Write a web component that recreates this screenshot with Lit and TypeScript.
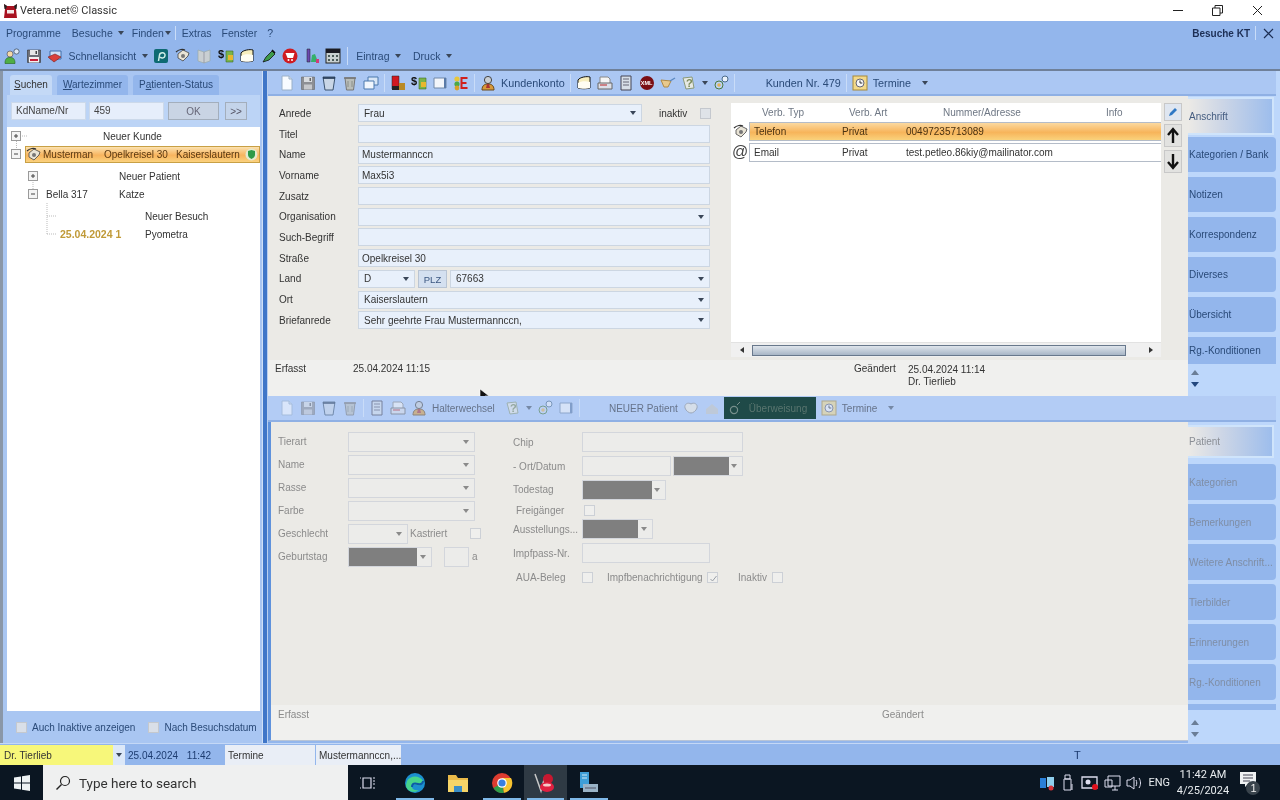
import { LitElement, html, css, svg } from "lit";
import { customElement } from "lit/decorators.js";

const icons: Record<string, any> = {
  person: svg`<circle cx="6" cy="6" r="3" fill="#f4d9a8" stroke="#556" stroke-width=".7"/><path d="M1 15.500c0-5 2-6 5-6s5 1 5 6z" fill="#4fae45" stroke="#2c6e2a" stroke-width=".7"/><circle cx="12.500" cy="3.500" r="2.600" fill="#dfe8f6" stroke="#456" stroke-width=".8"/>`,
  save: svg`<path d="M1.500 2h13v12.500h-13z" fill="#6f7078" stroke="#333" stroke-width=".6"/><path d="M4 2h8v5H4z" fill="#e8e8e8"/><path d="M3 9h10v5.500H3z" fill="#f4f0f0"/><path d="M4 11h8v2H4z" fill="#c8203a"/><path d="M9.500 3h1.500v3H9.500z" fill="#444"/>`,
  saveg: svg`<path d="M1.500 2h13v12.500h-13z" fill="#8d8f94" stroke="#666" stroke-width=".6"/><path d="M4 2h8v5H4z" fill="#d8dbdf"/><path d="M4 9.500h8v5H4z" fill="#c6c8cc"/><path d="M9.500 3h1.500v3H9.500z" fill="#666"/>`,
  screen: svg`<path d="M3 3h11v8H3z" fill="#cfe0f5" stroke="#3f6da8"/><path d="M1 9l7-3 6 3-7 5z" fill="#d9403a" stroke="#7b1f1c" stroke-width=".6"/>`,
  pbox: svg`<rect x="1" y="1" width="14" height="14" rx="2" fill="#0e6a73"/><path d="M5.500 13l1-6c.5-3 6-3 5.500 .5S8 10 7 9" fill="none" stroke="#cfeee8" stroke-width="1.500"/>`,
  phone: svg`<path d="M3 6l5-4 6 3-1 3-5 5-5-3z" fill="#e9e4d6" stroke="#444" stroke-width=".8"/><circle cx="8" cy="8" r="2" fill="#777"/><path d="M1 4c3-3 7-3 9-2" fill="none" stroke="#333" stroke-width="1.200"/>`,
  book: svg`<path d="M2 2l6 2 6-2v11l-6 2-6-2z" fill="#c9cfd2" stroke="#9aa" stroke-width=".7"/><path d="M8 4v11" stroke="#889" stroke-width=".7"/>`,
  money: svg`<path d="M8 3h7v11H8z" fill="#7ab44b" stroke="#3f6e26" stroke-width=".6"/><path d="M10 7h5v5h-5z" fill="#e8b72e"/><text x="0" y="10" font-size="11" font-weight="700" font-family="Liberation Sans" fill="#111">$</text>`,
  mail: svg`<path d="M2 5c2-3 9-4 12-3v11c-3 1-9 1-12 0z" fill="#f7eebe" stroke="#111" stroke-width="1"/><path d="M2 8c3-2 8-2 12-1v6c-3 1-9 1-12 0z" fill="#fffdf2"/>`,
  syringe: svg`<path d="M2 14l3-5 6-6 3 3-6 6z" fill="#3d9a4a" stroke="#111" stroke-width=".8"/><path d="M11 2l3 3" stroke="#111" stroke-width="1.600"/>`,
  stop: svg`<circle cx="8" cy="8" r="7.500" fill="#cf1b22"/><path d="M3.500 5h9l-1.500 5H5.500z" fill="#fff"/><circle cx="6.500" cy="12" r="1" fill="#fff"/><circle cx="10" cy="12" r="1" fill="#fff"/>`,
  bottles: svg`<path d="M3 1h3v13H3z" fill="#6a4ab0" stroke="#222" stroke-width=".5"/><path d="M8 7l3-1 3 8H7z" fill="#35b06a"/><path d="M12 11h3v4h-3z" fill="#d03c7a"/>`,
  cal: svg`<rect x="1" y="1" width="14" height="14" fill="#c8d0d0" stroke="#222"/><path d="M1 1h14v4H1z" fill="#1a1a22"/><path d="M3 7h2v2H3zm4 0h2v2H7zm4 0h2v2h-2zM3 11h2v2H3zm4 0h2v2H7zm4 0h2v2h-2z" fill="#4a5a58"/>`,
  doc: svg`<path d="M3 1h7l3 3v11H3z" fill="#f8fbff" stroke="#9ab0c8"/><path d="M10 1v3h3" fill="#d6e2f0" stroke="#9ab0c8"/>`,
  trash: svg`<path d="M2 2h12l-2 13H4z" fill="#c9d6e6" stroke="#3c5470"/><path d="M2 3h12" stroke="#1d3350" stroke-width="1.600"/>`,
  trash2: svg`<path d="M3 3h10l-1.500 12h-7z" fill="#b9bdb9" stroke="#777"/><path d="M2 3h12" stroke="#777" stroke-width="1.600"/><path d="M6 6v6M10 6v6" stroke="#8a8f8a"/>`,
  copy: svg`<path d="M5 2h10v8H5z" fill="#d8e6f6" stroke="#4a78ad"/><path d="M1 6h10v8H1z" fill="#f0f6fd" stroke="#4a78ad"/>`,
  red: svg`<path d="M2 1h7v13H2z" fill="#d01820" stroke="#222" stroke-width=".5"/><path d="M9 8h6v7H9z" fill="#b98a25"/><path d="M2 11h7v4H2z" fill="#222"/>`,
  win: svg`<path d="M2 3h12v10H2z" fill="#f2f5fa" stroke="#7088a8"/><path d="M12 3h2v10h-2z" fill="#5a7aa8"/>`,
  kasse: svg`<circle cx="4" cy="4" r="2.600" fill="#e8c63a"/><circle cx="4" cy="9" r="2.600" fill="#4aa84a"/><circle cx="4" cy="13" r="2.400" fill="#d8a22a"/><path d="M14.500 3H8.500v10h6M8.500 8h5" fill="none" stroke="#d0201c" stroke-width="2"/>`,
  agent: svg`<circle cx="8" cy="5" r="3.600" fill="#c9ced4" stroke="#444"/><path d="M2 15c0-5 3-6 6-6s6 1 6 6z" fill="#d89a3c" stroke="#6a4a1c"/><path d="M7 9h2l1 4H6z" fill="#a33"/>`,
  fax: svg`<path d="M3 2h8l2 2v5H3z" fill="#f5f5f5" stroke="#888"/><path d="M1 8h14v6H1z" fill="#dcdfe8" stroke="#666"/><path d="M3 10h7" stroke="#b22"/>`,
  note: svg`<path d="M3 1h10v14H3z" fill="#d7dfe8" stroke="#445"/><path d="M5 4h6M5 7h6M5 10h6" stroke="#667"/>`,
  xml: svg`<circle cx="8" cy="8" r="7" fill="#7a0e14"/><text x="1.800" y="10" font-size="5.500" font-weight="700" font-family="Liberation Sans" fill="#fff">XML</text>`,
  cup: svg`<path d="M1 5l10 1-3 6H4z" fill="#e8c98c" stroke="#b08a44"/><path d="M10 6l5-3" stroke="#5a88c0" stroke-width="1.400"/>`,
  help: svg`<path d="M2 3l9-1 2 11-8 1z" fill="#e7e9e3" stroke="#8a9a7a"/><text x="5" y="12" font-size="11" font-weight="700" font-family="Liberation Sans" fill="#7a8a5a">?</text>`,
  link: svg`<circle cx="6" cy="10" r="4" fill="#fff3" stroke="#4a7a40"/><circle cx="12" cy="4" r="3" fill="#eaf2fb" stroke="#4a6a8a"/><circle cx="6" cy="10" r="1.800" fill="#e2b35c"/>`,
  clock: svg`<rect x="1" y="1" width="14" height="14" fill="#f2d98a" stroke="#a88a3a"/><circle cx="8" cy="8" r="4" fill="#f7f7f7" stroke="#667"/><path d="M8 5.500V8h2.300" stroke="#333" fill="none"/>`,
  heart: svg`<path d="M2 8c-1-4 3-6 6-4 3-2 7 0 6 4-1 3-4 5-6 5s-5-2-6-5z" fill="#f1eee0" stroke="#888"/>`,
  home: svg`<path d="M2 9l6-5 6 5v5H2z" fill="#c8c8c2"/>`,
  ring: svg`<circle cx="7" cy="10" r="3.600" fill="none" stroke="#bfc9c4" stroke-width="1.200"/><path d="M10 5l3-3" stroke="#bfc9c4"/>`,
};
const ic = (n: string) => html`<svg class="ic" viewBox="0 0 16 16" width="16" height="16">${icons[n]}</svg>`;
const arrow = html`<i class="dd"></i>`;

type T = string | { t?: string; w?: number; sep?: boolean; a?: boolean; box?: string };
const renderTb = (items: T[]) =>
  items.map((it) => {
    if (typeof it === "string") return ic(it);
    if (it.sep) return html`<i class="sep"></i>`;
    if (it.a) return arrow;
    if (it.w) return html`<i style="width:${it.w}px;flex:none"></i>`;
    if (it.box) return html`<span class="ueber">${ic("ring")}<span>${it.box}</span></span>`;
    return html`<span class="tbt">${it.t}</span>`;
  });

const field = (v = "", w = 352, dd = false) =>
  html`<div class="f ${dd ? "" : "tx"}" style="width:${w}px"><span>${v}</span>${dd ? arrow : ""}</div>`;
const dateF = (w: number, g: number) =>
  html`<div class="f date" style="width:${w}px"><b style="width:${g}px"></b>${arrow}</div>`;

@customElement("app-root")
export class AppRoot extends LitElement {
  static styles = css`
    :host { display:block; width:1280px; height:800px; overflow:hidden; position:relative; background:#93b6ec;
      font:10px "Liberation Sans",Arial,sans-serif; color:#222; filter:blur(.35px); }
    * { box-sizing:border-box; }
    .ic { flex:none; display:block; }
    .dd { flex:none; width:0; height:0; border:3px solid transparent; border-top:4px solid #3a4658; border-bottom:0; display:block; }
    .sep { flex:none; width:1px; height:18px; background:#c9dcf8; }
    .titlebar { height:21px; background:#fff; display:flex; align-items:center; padding:0 3px; font:11px Roboto,"Liberation Sans",sans-serif; color:#333; }
    .titlebar .name { margin-left:2px; flex:1; }
    .wc { width:40px; height:21px; display:flex; align-items:center; justify-content:center; }
    .menubar { height:24px; display:flex; align-items:center; padding:0 6px; color:#2a4a78; font-size:10.5px; }
    .menubar span { white-space:nowrap; }
    .toolbar { height:24px; display:flex; align-items:center; padding:0 0 2px 4px; gap:5.5px; color:#2a4a78; font-size:10.5px; }
    .toolbar .sep { margin-right:3px; }
    .tbt { white-space:nowrap; color:#2a4a78; }
    .main { display:flex; height:674px; border-top:2px solid #6f8099; }
    .left { width:262px; flex:none; background:#a9c6f2; border-left:3px solid #8a97a8; padding:4px 2px 0 4px; display:flex; flex-direction:column; }
    .tabs { display:flex; height:20px; padding-left:3px; gap:5px; align-items:flex-end; }
    .tab { height:20px; padding:4px 6px 0; background:#93b6ec; border-radius:3px 3px 0 0; color:#2a4a78; white-space:nowrap; }
    .tab.on { background:#c4d9f6; color:#333; padding:4px 4px 0; }
    u { text-underline-offset:1px; }
    .search { height:32px; background:#bcd4f6; display:flex; align-items:center; padding-left:4px; gap:3px; }
    .sf { height:18px; background:#e6eefb; border:1px solid #ccd9ea; padding:2px 4px; color:#444; }
    .okb { height:18px; width:51px; margin-left:1px; background:#c9d4e4; border:1px solid #a3aebc; text-align:center; padding-top:3px; color:#667; }
    .more { height:18px; width:22px; margin-left:3px; background:#c4d4ea; border:1px solid #a3aebc; text-align:center; padding-top:3px; color:#556; }
    .tree { flex:1; background:#fff; position:relative; color:#333; }
    .lines { position:absolute; left:0; top:0; pointer-events:none; }
    .tr { height:18px; display:grid; align-items:center; white-space:nowrap; }
    .tr.a { grid-template-columns:96px 1fr; }
    .tr.b { grid-template-columns:112px 1fr; margin-top:4px; }
    .tr.b2 { grid-template-columns:39px 73px 1fr; }
    .tr.c { grid-template-columns:138px 1fr; margin-top:4px; }
    .tr.c2 { grid-template-columns:53px 85px 1fr; }
    .tr.c2 b { color:#c09a38; font-size:10.5px; }
    .sel { margin:1px 0 0 18px; height:17px; background:linear-gradient(#fce2b0,#f8b45e 55%,#fbd27e); border:1px solid #c8a045; display:flex; align-items:center; position:relative; white-space:nowrap; color:#5a3810; }
    .sel .ic { margin:0 1px 0 0; }
    .sel .shield { position:absolute; right:1px; top:1px; }
    .bottom { height:32px; padding-left:9px; display:flex; align-items:center; background:#a9c6f2; color:#2a4a78; white-space:nowrap; }
    .chk { flex:none; width:11px; height:11px; background:#f2f2f2; border:1px solid #c4c8ce; display:block; position:relative; }
    .bottom .chk { margin-right:5px; background:#d9dfe8; }
    .bottom span { margin-right:13px; }
    .split { width:6px; flex:none; background:linear-gradient(90deg,#cfe0f7 0 1px,#3f76c8 1px 5px,#b8cff0 5px); }
    .center { width:920px; flex:none; display:flex; flex-direction:column; }
    .band { height:25px; background:#abc7f3; border-bottom:2px solid #8fb0e4; display:flex; align-items:center; padding-left:11px; gap:5px; width:1008px; position:relative; z-index:1; color:#2a4a78; font-size:10.8px; }
    .band.low { height:26px; background:#b3ccf5; }
    .dim .ic { opacity:.55; }
    .dim .tbt { color:#66738a; font-size:10px; }
    .dim .dd { opacity:.5; }
    .ueber { display:flex; align-items:center; gap:6px; width:92px; height:22px; background:#1f4a48; padding-left:3px; color:#59756f; margin-left:-1px; flex:none; font-size:10px; }
    .upper { height:264px; background:#ebeae6; display:flex; }
    .form { width:463px; padding:7px 0 0 11px; display:grid; grid-template-columns:79px auto; grid-auto-rows:20.7px; align-items:center; align-content:start; color:#333; }
    .f { height:18px; background:#e8f0fb; border:1px solid #ccd6e2; display:flex; align-items:center; padding:0 5px; justify-content:space-between; white-space:nowrap; }
    .f.tx { padding-left:3px; }
    .inrow { display:flex; align-items:center; }
    .inrow .lbl { margin-left:17px; width:34px; }
    .inrow .chk { margin-left:7px; background:#dfe3e8; }
    .plz { height:18px; width:29px; margin:0 3px; background:#d4e0f0; border:1px solid #b8c4d4; text-align:center; padding-top:3px; color:#3a5680; font-size:9.5px; }
    .tablep { width:430px; margin:7px 0 3px 0; background:#fff; display:flex; flex-direction:column; }
    .th,.td { display:grid; grid-template-columns:31px 87px 94px 163px 1fr; align-items:center; white-space:nowrap; }
    .th { height:19px; color:#6e7784; }
    .td { height:19px; margin-left:18px; grid-template-columns:4px 88px 64px 1fr; border:1px solid #b4bcc8; border-right:0; color:#333; position:relative; }
    .td.on { background:linear-gradient(#fbd9a0,#f7b45a 55%,#fad27c); color:#4a3210; }
    .td.n { margin-top:2px; }
    .ri { position:absolute; left:-17px; top:1px; }
    .at { position:absolute; left:-18px; top:-1px; font-size:16px; color:#444; line-height:18px; }
    .sp { flex:1; }
    .sb { height:15px; background:#f0f0f0; display:flex; align-items:center; position:relative; border-top:1px solid #e2e2e2; }
    .sb .th1 { position:absolute; left:21px; width:374px; top:2px; height:11px; background:linear-gradient(#dfe5ec,#a8b6c6); border:1px solid #68788c; }
    .sb .al,.sb .ar { position:absolute; top:4px; width:0; height:0; border:3px solid transparent; }
    .sb .al { left:9px; border-right:4px solid #333; border-left:0; }
    .sb .ar { right:8px; border-left:4px solid #333; border-right:0; }
    .vb { width:27px; padding:7px 0 0 3px; display:flex; flex-direction:column; gap:3px; }
    .vb div { width:18px; display:flex; align-items:center; justify-content:center; background:#e2e2e0; border:1px solid #c8c8c8; }
    .vb .p { height:18px; background:#dfe6f0; }
    .vb .ua { height:23px; }
    .foot { height:36px; background:#f0f0ee; display:grid; grid-template-columns:78px 501px 54px auto; padding:3px 0 0 7px; color:#333; }
    .foot div { line-height:12px; padding-top:1px; }
    .lower { height:283px; background:#ebeae6; display:flex; color:#8b8b8b; border-left:3px solid #5f92dc; padding:8px 0 0 7px; }
    .cl { display:grid; grid-template-columns:70px auto; grid-auto-rows:23px; align-items:center; align-content:start; width:235px; }
    .cr { display:grid; grid-template-columns:69px auto; grid-template-rows:24px 24px 23px 19px 18px 30px 18px; align-items:center; align-content:start; }
    .lower .f { background:#ececea; border:1.5px solid #d3d6dc; height:20px; }
    .lower .dd { border-top-color:#8a8a8a; }
    .f.date { padding:0 5px 0 0; background:#ececea; }
    .f.date b { display:block; height:100%; background:#7f7f7f; }
    .lower .chk { background:#efefed; border-color:#ccd0d6; }
    .chk svg { position:absolute; left:1px; top:1px; }
    .rowf { display:flex; align-items:center; }
    .foot2 { height:36px; background:#f0f0ee; display:grid; grid-template-columns:604px auto; padding:4px 0 0 7px; color:#8b8b8b; border-left:3px solid #5f92dc; border-bottom:1px solid #b8c4d6; }
    .side { width:92px; flex:none; background:#bdd7fb; display:flex; flex-direction:column; overflow:hidden; padding-top:26px; }
    .st { flex:none; width:88px; background:#93b6ec; border-radius:0 4px 4px 0; display:flex; align-items:center; color:#2a4a78; padding-left:1px; white-space:nowrap; margin-top:5px; height:35px; }
    .st.on { background:linear-gradient(90deg,#eceae6,#cdd6e6 40%,#9dbdec); border:2px solid #cfe4fb; border-left:0; width:86px; height:38px; color:#445c80; margin-top:0; border-radius:0; }
    .st.cut { height:27px; border-radius:0; }
    .sarrows { height:32px; padding:6px 0 0 3px; display:flex; flex-direction:column; gap:7px; }
    .sarrows i { display:block; width:0; height:0; border:4px solid transparent; }
    .sarrows .u { border-bottom:5px solid #6a7d96; border-top:0; }
    .sarrows .d { border-top:5px solid #22477e; border-bottom:0; }
    .bandgap { height:26px; flex:none; }
    .lowside .st { color:#7f8ea6; margin-top:4px; height:36px; }
    .lowside .st.on { margin-top:3px; height:33px; color:#8b8f96; }
    .strip { flex:none; height:6px; margin:4px 0 0; width:88px; background:#93b6ec; }
    .status { height:22px; display:flex; align-items:flex-end; background:#93b6ec; border-top:1px solid #c4d8f6; color:#1d3c70; position:relative; }
    .status .y { width:113px; height:20px; background:#f7f77a; padding:5px 0 0 4px; color:#333; }
    .status .ya { width:12px; height:20px; background:#dce8f8; display:flex; align-items:center; justify-content:center; }
    .status .dt { width:100px; height:20px; padding:5px 0 0 3px; word-spacing:6px; }
    .status .bx { height:20px; background:#e9eef6; padding:5px 0 0 3px; color:#333; margin-right:1px; white-space:nowrap; overflow:hidden; }
    .status .t { position:absolute; left:1074px; top:5px; font-size:11px; }
    .taskbar { height:35px; background:#0b1622; display:flex; align-items:center; color:#e8ecef; }
    .start { width:43px; display:flex; justify-content:center; }
    .srch { width:305px; height:35px; background:#eff0f0; display:flex; align-items:center; padding-left:12px; gap:8px; color:#333; font:13.5px Roboto,"Liberation Sans",sans-serif; }
    .tv { width:34px; margin:0 8px 0 3px; display:flex; justify-content:center; }
    .tk { width:43.5px; height:35px; display:flex; align-items:center; justify-content:center; position:relative; }
    .tk.on { background:#2f3a44; }
    .tk u { position:absolute; left:3px; right:3px; bottom:0; height:2px; background:#7fb8e8; }
    .tray { margin-left:auto; display:flex; align-items:center; gap:5px; padding-right:18px; }
    .eng { font:11px Roboto,"Liberation Sans",sans-serif; }
    .clock { font:11px/16px Roboto,"Liberation Sans",sans-serif; text-align:center; width:56px; margin-right:2px; }
    .cursor { position:absolute; left:479px; top:388px; }
  `;

  render() {
    const winPath = html`<svg width="18" height="18" viewBox="0 0 18 18"><path d="M1 3.500l7-1v6H1zM9 2.300l8-1.200v7.400H9zM1 9.500h7v6l-7-1zM9 9.500h8v7.400l-8-1.200z" fill="#eef2f4"/></svg>`;
    return html`
      <div class="titlebar">
        <svg width="15" height="16" viewBox="0 0 15 16"><path d="M1 1l3 2h7l3-2-1 5 1 9H1l1-9z" fill="#a81220"/><path d="M1 1l3 2-1 3H1.500zM14 1l-3 2 1 3h1.500z" fill="#222"/><path d="M4 7h7v3.500H4z" fill="#f4e8e8"/></svg>
        <span class="name">Vetera.net© Classic</span>
        <div class="wc"><svg width="11" height="11"><path d="M1 5.500h10" stroke="#222"/></svg></div>
        <div class="wc"><svg width="11" height="11"><path d="M.5 3h7.500v7.500H.5zM3 3V.5h7.500V8H8" fill="none" stroke="#222"/></svg></div>
        <div class="wc"><svg width="11" height="11"><path d="M1 1l9 9M10 1l-9 9" stroke="#222"/></svg></div>
      </div>
      <div class="menubar">
        <span>Programme</span><span style="margin-left:11px">Besuche</span><i class="dd" style="margin-left:5px"></i>
        <span style="margin-left:8px">Finden</span><i class="dd" style="margin-left:1px"></i><i class="sep" style="margin:0 6px 0 4px;height:14px"></i>
        <span>Extras</span><span style="margin-left:10px">Fenster</span><span style="margin-left:10px">?</span>
        <span style="margin-left:auto;font-weight:700;font-size:10px;color:#1d2f55">Besuche KT</span><i class="sep" style="margin:0 7px 0 5px;height:14px"></i>
        <svg width="11" height="11"><path d="M1 1l9 9M10 1l-9 9" stroke="#1d2f55" stroke-width="1.200"/></svg>
      </div>
      <div class="toolbar">
        ${renderTb(["person","save","screen",{t:"Schnellansicht"},{a:true},"pbox","phone","book","money","mail","syringe","stop","bottles","cal",{sep:true},{t:"Eintrag"},{a:true},{w:1},{t:"Druck"},{a:true}])}
      </div>
      <div class="main">
        <div class="left">
          <div class="tabs">
            <div class="tab on"><u>S</u>uchen</div>
            <div class="tab"><u>W</u>artezimmer</div>
            <div class="tab">P<u>a</u>tienten-Status</div>
          </div>
          <div class="search">
            <div class="sf" style="width:75px">KdName/Nr</div>
            <div class="sf" style="width:75px">459</div>
            <div class="okb">OK</div>
            <div class="more">&gt;&gt;</div>
          </div>
          <div class="tree">
            <svg class="lines" width="120" height="130">
              <path d="M9.500 14v14M15 9h5M26 45v22M26 49h5M26 67h5M40 76v32M40 89h10M40 107h10" stroke="#bbb" fill="none" stroke-dasharray="1 1"/>
              ${[[9,9,1],[9,27,0],[26,49,1],[26,67,0]].map(([x,y,p])=>svg`<rect x="${x-4.5}" y="${y-4.5}" width="9" height="9" fill="#f4f4f4" stroke="#9a9a9a"/><path d="M${x-2} ${y}h4${p?`M${x} ${y-2}v4`:""}" stroke="#444"/>`)}
            </svg>
            <div class="tr a"><i></i><span>Neuer Kunde</span></div>
            <div class="sel">
              ${ic("phone")}<span style="width:61px">Musterman</span><span style="width:72px">Opelkreisel 30</span><span>Kaiserslautern</span>
              <svg class="shield" width="13" height="13" viewBox="0 0 13 13"><circle cx="6.500" cy="6.500" r="6" fill="#e4ead0"/><path d="M3 3l3.500-1 3.500 1v4c0 2-2 3-3.500 4C5 10 3 9 3 7z" fill="#2f9a48"/></svg>
            </div>
            <div class="tr b"><i></i><span>Neuer Patient</span></div>
            <div class="tr b2"><i></i><span>Bella 317</span><span>Katze</span></div>
            <div class="tr c"><i></i><span>Neuer Besuch</span></div>
            <div class="tr c2"><i></i><b>25.04.2024 1</b><span>Pyometra</span></div>
          </div>
          <div class="bottom"><i class="chk"></i><span>Auch Inaktive anzeigen</span><i class="chk"></i><span>Nach Besuchsdatum</span></div>
        </div>
        <div class="split"></div>
        <div class="center">
          <div class="band">
            ${renderTb(["doc","saveg","trash","trash2","copy",{sep:true},"red","money","win","kasse",{sep:true},"agent",{t:"Kundenkonto"},{sep:true},"mail","fax","note","xml","cup","help",{a:true},"link",{sep:true},{w:21},{t:"Kunden Nr. 479"},{sep:true},"clock",{t:"Termine"},{w:1},{a:true}])}
          </div>
          <div class="upper">
            <div class="form">
              <span>Anrede</span>
              <div class="inrow">${field("Frau",284,true)}<span class="lbl">inaktiv</span><i class="chk"></i></div>
              <span>Titel</span>${field()}
              <span>Name</span>${field("Mustermannccn")}
              <span>Vorname</span>${field("Max5i3")}
              <span>Zusatz</span>${field()}
              <span>Organisation</span>${field("",352,true)}
              <span>Such-Begriff</span>${field()}
              <span>Straße</span>${field("Opelkreisel 30")}
              <span>Land</span>
              <div class="inrow">${field("D",57,true)}<div class="plz">PLZ</div>${field("67663",260,true)}</div>
              <span>Ort</span>${field("Kaiserslautern",352,true)}
              <span>Briefanrede</span>${field("Sehr geehrte Frau Mustermannccn,",352,true)}
            </div>
            <div class="tablep">
              <div class="th"><i></i><span>Verb. Typ</span><span>Verb. Art</span><span>Nummer/Adresse</span><span>Info</span></div>
              <div class="td on"><i></i><span>Telefon</span><span>Privat</span><span>00497235713089</span><svg class="ri" width="16" height="16" viewBox="0 0 16 16">${icons.phone}</svg></div>
              <div class="td n"><i></i><span>Email</span><span>Privat</span><span>test.petleo.86kiy@mailinator.com</span><span class="at">@</span></div>
              <div class="sp"></div>
              <div class="sb"><i class="al"></i><i class="th1"></i><i class="ar"></i></div>
            </div>
            <div class="vb">
              <div class="p"><svg width="12" height="12" viewBox="0 0 12 12"><path d="M2 10l1-3 5-5 2 2-5 5z" fill="#2f78c4"/></svg></div>
              <div class="ua"><svg width="14" height="17" viewBox="0 0 14 17"><path d="M7 16V3M2 8l5-6 5 6" fill="none" stroke="#111" stroke-width="2.400"/></svg></div>
              <div class="ua"><svg width="14" height="17" viewBox="0 0 14 17"><path d="M7 1v13M2 9l5 6 5-6" fill="none" stroke="#111" stroke-width="2.400"/></svg></div>
            </div>
          </div>
          <div class="foot">
            <span>Erfasst</span><span>25.04.2024 11:15</span><span>Geändert</span><div>25.04.2024 11:14<br/>Dr. Tierlieb</div>
          </div>
          <div class="band low dim">
            ${renderTb(["doc","saveg","trash","trash2",{sep:true},"note","fax","agent",{t:"Halterwechsel"},{w:.1},"help",{a:true},"link","win",{sep:true},{w:19},{t:"NEUER Patient"},"heart","home",{box:"Überweisung"},"clock",{t:"Termine"},{w:1},{a:true}])}
          </div>
          <div class="lower">
            <div class="cl">
              <span>Tierart</span>${field("",127,true)}
              <span>Name</span>${field("",127,true)}
              <span>Rasse</span>${field("",127,true)}
              <span>Farbe</span>${field("",127,true)}
              <span>Geschlecht</span>
              <div class="rowf">${field("",60,true)}<span style="margin:0 0 0 2px;width:60px">Kastriert</span><i class="chk"></i></div>
              <span>Geburtstag</span>
              <div class="rowf">${dateF(84,68)}<div class="f" style="width:25px;margin-left:12px"></div><span style="margin-left:3px">a</span></div>
            </div>
            <div class="cr">
              <span>Chip</span>${field("",161)}
              <span>- Ort/Datum</span>
              <div class="rowf">${field("",89)}<span style="width:2px"></span>${dateF(70,55)}</div>
              <span>Todestag</span>${dateF(84,69)}
              <span style="padding-left:3px">Freigänger</span><i class="chk" style="margin-left:2px"></i>
              <span style="overflow:hidden;white-space:nowrap">Ausstellungs...</span>${dateF(71,55)}
              <span>Impfpass-Nr.</span>${field("",128)}
              <span style="padding-left:3px">AUA-Beleg</span>
              <div class="rowf"><i class="chk"></i><span style="margin-left:14px;width:100px">Impfbenachrichtigung</span><i class="chk"><svg width="9" height="9" viewBox="0 0 9 9"><path d="M1.500 5l2 2 4-5" fill="none" stroke="#9aa0a8"/></svg></i><span style="margin-left:20px;width:34px">Inaktiv</span><i class="chk"></i></div>
            </div>
          </div>
          <div class="foot2"><span>Erfasst</span><span>Geändert</span></div>
        </div>
        <div class="side">
          <div class="st on">Anschrift</div>
          <div class="st" style="margin-top:2px">Kategorien / Bank</div>
          <div class="st">Notizen</div>
          <div class="st">Korrespondenz</div>
          <div class="st">Diverses</div>
          <div class="st">Übersicht</div>
          <div class="st cut">Rg.-Konditionen</div>
          <div class="sarrows"><i class="u"></i><i class="d"></i></div>
          <div class="bandgap"></div>
          <div class="lowside">
            <div class="st on">Patient</div>
            <div class="st" style="margin-top:6px">Kategorien</div>
            <div class="st">Bemerkungen</div>
            <div class="st">Weitere Anschrift...</div>
            <div class="st">Tierbilder</div>
            <div class="st">Erinnerungen</div>
            <div class="st">Rg.-Konditionen</div>
          </div>
          <div class="strip"></div>
          <div class="sarrows" style="padding-top:10px"><i class="u"></i><i class="u" style="transform:rotate(180deg)"></i></div>
        </div>
      </div>
      <div class="status">
        <div class="y">Dr. Tierlieb</div><div class="ya">${arrow}</div>
        <div class="dt">25.04.2024 11:42</div>
        <div class="bx" style="width:90px">Termine</div>
        <div class="bx" style="width:85px">Mustermannccn,...</div>
        <span class="t">T</span>
      </div>
      <div class="taskbar">
        <div class="start">${winPath}</div>
        <div class="srch"><svg width="16" height="16" viewBox="0 0 16 16"><circle cx="10" cy="6" r="4.500" fill="none" stroke="#222" stroke-width="1.200"/><path d="M6.500 9.500L1.500 14.500" stroke="#222" stroke-width="1.400"/></svg>Type here to search</div>
        <div class="tv"><svg width="16" height="16" viewBox="0 0 16 16"><path d="M3 3h8v10H3zM0 3h1M0 13h1M13 3h2M13 6h2M13 9h2M13 13h2" fill="none" stroke="#dde" stroke-width="1.200"/></svg></div>
        <div class="tk"><svg width="22" height="22" viewBox="0 0 22 22"><circle cx="11" cy="11" r="10" fill="#1c8fd0"/><path d="M3 9c3-6 13-6 16 0 1 3-2 5-6 4-3-1-5-1-5 2 0 2 3 4 7 3-5 4-13 1-13-5z" fill="#47d48c"/><path d="M8 15c0-4 3-4 6-3s5-1 5-3" fill="none" stroke="#0c5aa8" stroke-width="2"/></svg><u></u></div>
        <div class="tk"><svg width="22" height="20" viewBox="0 0 22 20"><path d="M1 2h8l2 3h10v14H1z" fill="#e9b949"/><path d="M1 7h20v12H1z" fill="#f6d568"/><path d="M7 13h8v6H7z" fill="#3a8ec8"/></svg></div>
        <div class="tk"><svg width="22" height="22" viewBox="0 0 22 22"><circle cx="11" cy="11" r="10" fill="#dc3c30"/><path d="M11 11L2.500 16A10 10 0 0 0 13 20.800z" fill="#2f9e4a"/><path d="M11 6h9a10 10 0 0 1-7 14.800z" fill="#f6c430"/><circle cx="11" cy="11" r="4.800" fill="#fff"/><circle cx="11" cy="11" r="3.600" fill="#3a7fe0"/></svg><u></u></div>
        <div class="tk on"><svg width="24" height="24" viewBox="0 0 24 24"><path d="M2 3l6 17 4-15" fill="none" stroke="#c8c8c8" stroke-width="1.500"/><circle cx="15" cy="8" r="5" fill="#c81830"/><ellipse cx="14" cy="16" rx="7" ry="5" fill="#e02040"/><ellipse cx="14" cy="14" rx="4" ry="1.500" fill="#f6c8c8"/></svg><u></u></div>
        <div class="tk"><svg width="22" height="24" viewBox="0 0 22 24"><path d="M2 1h9v16H2z" fill="#3f9fd8"/><path d="M4 4h5M4 7h5" stroke="#cfeaf8"/><path d="M5 13h15v8H5z" fill="#9ab4c8"/><path d="M7 17h11" stroke="#556"/></svg><u></u></div>
        <div class="tray">
          <svg width="16" height="16" viewBox="0 0 16 16"><path d="M1 3h6v10H1z" fill="#2a7fd8"/><path d="M8 2h7v10H8z" fill="#8fcfee"/><circle cx="12" cy="13" r="2.500" fill="#d8343a"/></svg>
          <svg width="16" height="18" viewBox="0 0 16 18"><path d="M5 1h5v4H5zM4 5h7v11H4z" fill="none" stroke="#dde"/><path d="M12 10v6" stroke="#dde"/></svg>
          <svg width="18" height="16" viewBox="0 0 18 16"><path d="M1 2h15v11H1z" fill="none" stroke="#dde" stroke-width="1.300"/><circle cx="7" cy="7" r="2.500" fill="#dde"/><circle cx="14" cy="12" r="3" fill="#e0101c"/></svg>
          <svg width="17" height="16" viewBox="0 0 17 16"><path d="M4 1h12v10H4zM1 5h7v7H1zM8 15h6M11 11v4" fill="#0b1622" stroke="#dde"/></svg>
          <svg width="17" height="16" viewBox="0 0 17 16"><path d="M1 5h3l4-3v12l-4-3H1zM10 5c1 2 1 4 0 6M13 3c2 3 2 7 0 10" fill="none" stroke="#dde"/></svg>
          <span class="eng">ENG</span>
          <div class="clock">11:42 AM<br/>4/25/2024</div>
          <svg width="24" height="26" viewBox="0 0 24 26"><path d="M2 2h16v12h-8l-3 3v-3H2z" fill="#eef1f3"/><path d="M5 5h10M5 8h10M5 11h7" stroke="#445"/><circle cx="15" cy="18" r="7" fill="#39434c"/><text x="12.500" y="22" font-size="11" font-family="Liberation Sans" fill="#eee">1</text></svg>
        </div>
      </div>
      <svg class="cursor" width="11" height="16" viewBox="0 0 11 16"><path d="M1 1v11l3-3 2 5 2-1-2-5h4z" fill="#111" stroke="#fff" stroke-width=".6"/></svg>
    `;
  }
}
